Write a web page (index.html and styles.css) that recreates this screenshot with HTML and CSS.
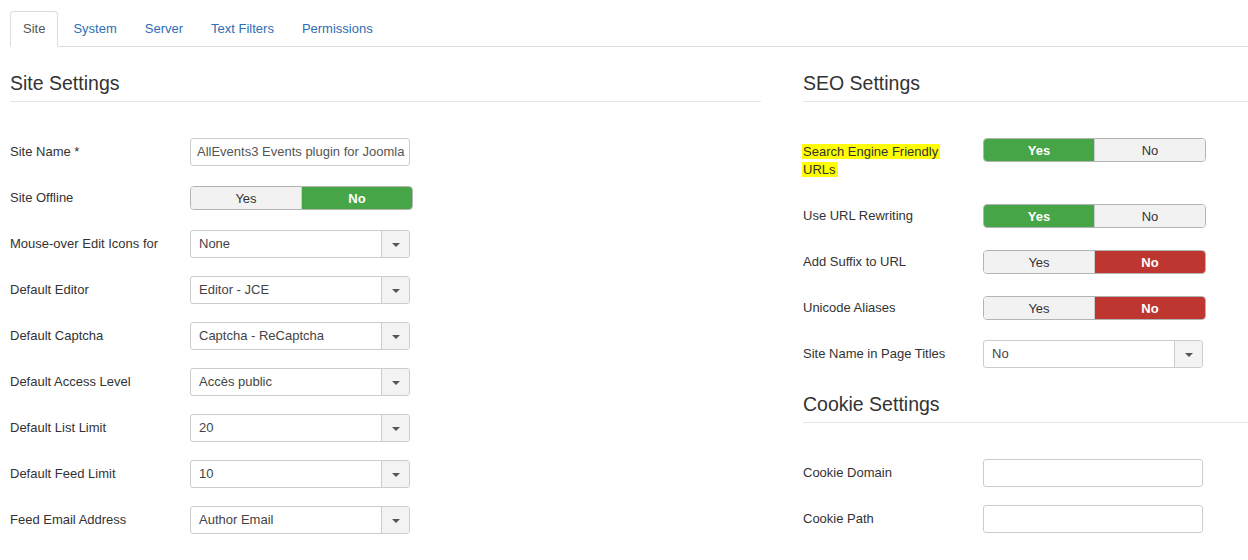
FILE: index.html
```html
<!DOCTYPE html>
<html>
<head>
<meta charset="utf-8">
<link rel="stylesheet" href="styles.css">
</head>
<body>
<div class="page">
  <ul class="tabs">
    <li class="tab active">Site</li>
    <li class="tab">System</li>
    <li class="tab">Server</li>
    <li class="tab">Text Filters</li>
    <li class="tab">Permissions</li>
  </ul>
  <div class="columns">
    <div class="col">
      <div class="legend">Site Settings</div>
      <div class="rows">
        <div class="row"><div class="label">Site Name *</div><div class="input">AllEvents3 Events plugin for Joomla</div></div>
        <div class="row"><div class="label">Site Offline</div><div class="toggle"><span class="opt">Yes</span><span class="opt on-green">No</span></div></div>
        <div class="row"><div class="label">Mouse-over Edit Icons for</div><div class="select"><span class="val">None</span><span class="arrow"><i></i></span></div></div>
        <div class="row"><div class="label">Default Editor</div><div class="select"><span class="val">Editor - JCE</span><span class="arrow"><i></i></span></div></div>
        <div class="row"><div class="label">Default Captcha</div><div class="select"><span class="val">Captcha - ReCaptcha</span><span class="arrow"><i></i></span></div></div>
        <div class="row"><div class="label">Default Access Level</div><div class="select"><span class="val">Accès public</span><span class="arrow"><i></i></span></div></div>
        <div class="row"><div class="label">Default List Limit</div><div class="select"><span class="val">20</span><span class="arrow"><i></i></span></div></div>
        <div class="row"><div class="label">Default Feed Limit</div><div class="select"><span class="val">10</span><span class="arrow"><i></i></span></div></div>
        <div class="row"><div class="label">Feed Email Address</div><div class="select"><span class="val">Author Email</span><span class="arrow"><i></i></span></div></div>
      </div>
    </div>
    <div class="col">
      <div class="legend">SEO Settings</div>
      <div class="rows">
        <div class="row tall"><div class="label top"><span class="hl">Search Engine Friendly URLs</span></div><div class="toggle"><span class="opt on-green">Yes</span><span class="opt">No</span></div></div>
        <div class="row"><div class="label">Use URL Rewriting</div><div class="toggle"><span class="opt on-green">Yes</span><span class="opt">No</span></div></div>
        <div class="row"><div class="label">Add Suffix to URL</div><div class="toggle"><span class="opt">Yes</span><span class="opt on-red">No</span></div></div>
        <div class="row"><div class="label">Unicode Aliases</div><div class="toggle"><span class="opt">Yes</span><span class="opt on-red">No</span></div></div>
        <div class="row"><div class="label">Site Name in Page Titles</div><div class="select"><span class="val">No</span><span class="arrow"><i></i></span></div></div>
      </div>
      <div class="legend second">Cookie Settings</div>
      <div class="rows">
        <div class="row"><div class="label">Cookie Domain</div><div class="input"></div></div>
        <div class="row"><div class="label">Cookie Path</div><div class="input"></div></div>
      </div>
    </div>
  </div>
</div>
</body>
</html>
```

FILE: styles.css
```css
* { box-sizing: border-box; }
html, body { margin: 0; padding: 0; background: #fff; }
body {
  font-family: "Liberation Sans", Arial, sans-serif;
  font-size: 13px;
  color: #333;
  overflow: hidden;
}
.page { padding: 11px 0 0 10px; }
.tabs {
  list-style: none;
  margin: 0;
  padding: 0;
  display: flex;
  border-bottom: 1px solid #ddd;
}
.tab {
  padding: 8px 12px;
  line-height: 18px;
  margin-right: 2px;
  margin-bottom: -1px;
  border: 1px solid transparent;
  border-radius: 4px 4px 0 0;
  color: #2f6db5;
}
.tab.active {
  color: #555;
  border-color: #ddd #ddd transparent;
  background: #fff;
}
.columns {
  display: grid;
  grid-template-columns: 751px 1fr;
  column-gap: 42px;
  padding-top: 18px;
}
.legend {
  font-size: 19.5px;
  line-height: 36px;
  color: #333;
  border-bottom: 1px solid #e5e5e5;
  margin-bottom: 36px;
}
.legend.second { margin-top: 18px; }
.rows { display: flex; flex-direction: column; gap: 18px; }
.row {
  display: flex;
  align-items: center;
  min-height: 28px;
}
.row.tall { align-items: flex-start; min-height: 46px; }
.label {
  width: 180px;
  flex: none;
  padding-right: 20px;
  line-height: 18px;
}
.label.top { padding-top: 5px; }
.hl {
  background: #ffff00;
  padding: 0 2px 0 1px;
  margin-left: -1px;
  -webkit-box-decoration-break: clone;
  box-decoration-break: clone;
}
.input {
  width: 220px;
  height: 28px;
  border: 1px solid #ccc;
  border-radius: 3px;
  padding: 0 6px;
  line-height: 26px;
  white-space: nowrap;
  overflow: hidden;
  color: #555;
}
.select {
  width: 220px;
  height: 28px;
  border: 1px solid #ccc;
  border-radius: 3px;
  display: flex;
  overflow: hidden;
  background: #fff;
}
.select .val {
  flex: 1;
  padding-left: 8px;
  line-height: 26px;
  color: #444;
}
.select .arrow {
  width: 28px;
  background: #f3f3f3;
  border-left: 1px solid #ccc;
  display: flex;
  align-items: center;
  justify-content: center;
}
.select .arrow i {
  width: 0;
  height: 0;
  border-left: 4px solid transparent;
  border-right: 4px solid transparent;
  border-top: 4px solid #555;
  margin-top: 1px;
}
.toggle {
  width: 223px;
  height: 24px;
  display: flex;
  border: 1px solid #b3b3b3;
  border-radius: 4px;
  overflow: hidden;
}
.toggle .opt {
  flex: 1;
  display: flex;
  align-items: center;
  justify-content: center;
  background: #f2f2f2;
  color: #333;
}
.toggle .opt + .opt { border-left: 1px solid #ccc; }
.toggle .on-green {
  background: #46a546;
  color: #fff;
  font-weight: bold;
}
.toggle .on-red {
  background: #bd362f;
  color: #fff;
  font-weight: bold;
}
```
